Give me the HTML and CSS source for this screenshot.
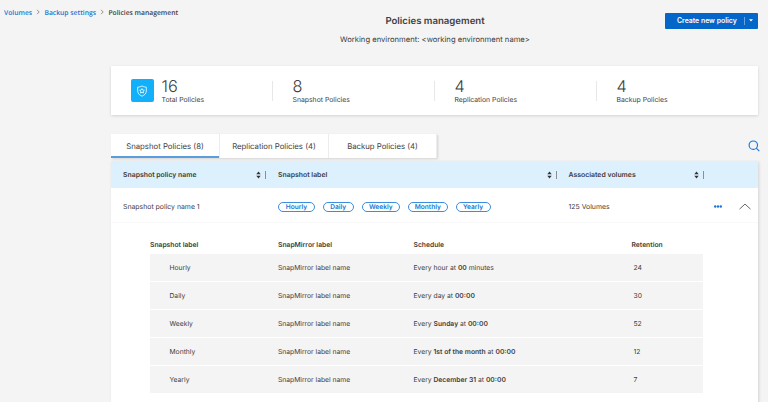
FILE: index.html
```html
<!DOCTYPE html>
<html lang="en">
<head>
<meta charset="utf-8">
<title>Policies management</title>
<link rel="stylesheet" href="styles.css">
</head>
<body>
<header class="top">
  <nav class="crumbs">
    <a>Volumes</a>
    <svg class="sep" viewBox="0 0 4 6"><path d="M1 .8 3.2 3 1 5.2"/></svg>
    <a>Backup settings</a>
    <svg class="sep" viewBox="0 0 4 6"><path d="M1 .8 3.2 3 1 5.2"/></svg>
    <span>Policies management</span>
  </nav>
  <div class="heading">
    <h1>Policies management</h1>
    <p>Working environment: &lt;working environment name&gt;</p>
  </div>
  <button class="create"><span>Create new policy</span><i class="split"></i><svg viewBox="0 0 4 3"><path d="M0 .3h4L2 2.5z"/></svg></button>
</header>
<main>
  <section class="stats">
    <div class="stat">
      <div class="shield"><svg viewBox="0 0 12 12"><path d="M6 .9C4.6 1.8 3.2 2.1 1.7 2.1V6c0 2.5 1.7 4.1 4.3 5.2C8.6 10.1 10.3 8.5 10.3 6V2.1C8.8 2.1 7.4 1.8 6 .9z"/><path d="m6 3.6.75 1.450 1.6.25L7.2 6.450l.25 1.6L6 7.3l-1.450.75.25-1.6L3.650 5.3l1.6-.25z"/></svg></div>
      <div><b>16</b><span>Total Policies</span></div>
    </div>
    <div class="stat"><div><b>8</b><span>Snapshot Policies</span></div></div>
    <div class="stat"><div><b>4</b><span>Replication Policies</span></div></div>
    <div class="stat"><div><b>4</b><span>Backup Policies</span></div></div>
  </section>
  <div class="toolbar">
    <div class="tabs">
      <div class="tab active">Snapshot Policies (8)</div>
      <div class="tab">Replication Policies (4)</div>
      <div class="tab">Backup Policies (4)</div>
    </div>
    <svg class="search" viewBox="0 0 12 12"><circle cx="5.300" cy="5.200" r="4.200"/><path d="m8.300 8.200 3 3"/></svg>
  </div>
  <section class="table">
    <div class="row head">
      <div class="cell">Snapshot policy name<svg class="sort" viewBox="0 0 11 8"><path d="M.3 3.300 2.500.600l2.200 2.700zM.3 4.700h4.400L2.500 7.400z"/><path class="bar" d="M9.500 0v8"/></svg></div>
      <div class="cell">Snapshot label<svg class="sort" viewBox="0 0 11 8"><path d="M.3 3.300 2.500.600l2.200 2.700zM.3 4.700h4.400L2.500 7.400z"/><path class="bar" d="M9.500 0v8"/></svg></div>
      <div class="cell">Associated volumes<svg class="sort" viewBox="0 0 11 8"><path d="M.3 3.300 2.500.600l2.200 2.700zM.3 4.700h4.400L2.500 7.400z"/><path class="bar" d="M9.500 0v8"/></svg></div>
      <div class="cell"></div>
    </div>
    <div class="row data">
      <div class="cell">Snapshot policy name 1</div>
      <div class="cell pills"><span class="pill hourly">Hourly</span><span class="pill daily">Daily</span><span class="pill weekly">Weekly</span><span class="pill monthly">Monthly</span><span class="pill yearly">Yearly</span></div>
      <div class="cell">125 Volumes</div>
      <div class="cell actions">
        <svg class="dots" viewBox="0 0 8 3"><circle cx="1.200" cy="1.500" r="1.200"/><circle cx="4" cy="1.500" r="1.200"/><circle cx="6.800" cy="1.500" r="1.200"/></svg>
        <svg class="chev" viewBox="0 0 12 7"><path d="M.5 6.100 6 1.100l5.500 5"/></svg>
      </div>
    </div>
    <div class="details">
      <div class="line titles"><span>Snapshot label</span><span>SnapMirror label</span><span>Schedule</span><span>Retention</span></div>
      <div class="line"><span>Hourly</span><span>SnapMirror label name</span><span>Every hour at <b>00</b> minutes</span><span>24</span></div>
      <div class="line"><span>Daily</span><span>SnapMirror label name</span><span>Every day at <b>00:00</b></span><span>30</span></div>
      <div class="line"><span>Weekly</span><span>SnapMirror label name</span><span>Every <b>Sunday</b> at <b>00:00</b></span><span>52</span></div>
      <div class="line"><span>Monthly</span><span>SnapMirror label name</span><span>Every <b>1st of the month</b> at <b>00:00</b></span><span>12</span></div>
      <div class="line"><span>Yearly</span><span>SnapMirror label name</span><span>Every <b>December 31</b> at <b>00:00</b></span><span>7</span></div>
    </div>
  </section>
</main>
</body>
</html>
```
FILE: styles.css
```css
* { box-sizing: border-box; }
body { margin: 0; height: 402px; overflow: hidden; background: #f4f4f4; color: #404040; font-family: Inter, sans-serif; font-size: 6.900px; line-height: 10px; text-rendering: geometricPrecision; }
svg { display: block; fill: none; flex: none; }
.top { display: grid; grid-template-columns: 330px 210px 1fr; height: 66px; }
.crumbs { display: flex; align-items: center; height: 10px; margin: 7px 0 0 4px; font: 600 6.750px/10px "Open Sans", sans-serif; white-space: nowrap; }
.crumbs a { color: #1976d2; }
.crumbs a, .crumbs span { padding-top: 1px; }
.sep { width: 4px; height: 6px; margin: 0 4.200px; stroke: #777; stroke-width: .8; }
.heading { text-align: center; }
h1 { margin: 16px 0 0; font-size: 9.600px; line-height: 12px; font-weight: 600; }
.heading p { margin: 6px 0 0; font-size: 7.650px; line-height: 12px; white-space: nowrap; }
.create { display: flex; align-items: center; justify-self: end; width: 93px; height: 16px; margin: 12.500px 10px 0 0; padding: 0 0 0 12px; border: 0; border-radius: 1px; background: #0566ca; color: #fff; font: 600 6.900px/10px Inter, sans-serif; white-space: nowrap; }
.create span { width: 67px; text-align: left; }
.split { width: 1px; height: 8px; background: #69a3df; }
.create svg { width: 4px; height: 3px; margin-left: 4px; fill: #fff; }
main { width: 647px; margin-left: 111px; }
.stats { display: grid; grid-template-columns: repeat(4, 162px); width: 647px; height: 49px; background: #fff; box-shadow: 0 1px 3px #0002; align-items: center; }
.stat { display: flex; align-items: center; height: 20px; padding-left: 19.500px; border-right: 1px solid #e7e7e7; }
.stat:last-child { border-right: 0; }
.shield { display: grid; place-items: center; width: 23px; height: 23px; margin-right: 8px; border-radius: 2px; background: #12affa; }
.shield svg { width: 12px; height: 12px; stroke: #fff; stroke-width: .8; }
.stat b { display: block; font-size: 16.300px; line-height: 18px; font-weight: 300; }
.stat span { display: block; font-size: 6.850px; line-height: 9px; white-space: nowrap; }
.toolbar { display: flex; justify-content: space-between; height: 46px; padding-top: 19px; }
.tabs { display: grid; grid-template-columns: 109px 109px 108px; height: 23.500px; background: #fff; box-shadow: 1px 1px 2px #0002; font-size: 7.750px; }
.tab { display: flex; align-items: center; justify-content: center; border-right: 1px solid #ececec; white-space: nowrap; }
.tab.active { box-shadow: inset 0 -2px #599ddd; }
.search { width: 12px; height: 12px; margin: 6px -2px 0 0; stroke: #1976d2; stroke-width: 1.150; }
.table { height: 260px; background: #fff; box-shadow: 1px 1px 3px #0002; }
.row { display: grid; grid-template-columns: 155px 290.500px 147.500px 1fr; }
.cell { display: flex; align-items: center; padding-left: 12px; white-space: nowrap; }
.head { height: 27px; background: #dcf0fe; font-weight: 600; }
.head .cell { justify-content: space-between; }
.sort { width: 11px; height: 8px; margin-right: -1px; fill: #333; }
.bar { stroke: #777; stroke-width: .8; }
.data { height: 35px; padding-top: 3px; border-bottom: 1px solid #f9f9f9; }
.pill { display: flex; align-items: center; justify-content: center; height: 10px; border: .8px solid #3c8ddd; border-radius: 5px; color: #1976d2; font-weight: 600; font-size: 6.600px; margin-right: 7.500px; }
.hourly { width: 37px; }
.daily { width: 31.500px; }
.weekly { width: 38.500px; }
.monthly { width: 40.500px; }
.yearly { width: 35px; }
.actions { padding-left: 10px; }
.dots { width: 8px; height: 3px; fill: #1976d2; }
.chev { width: 12px; height: 7px; margin-left: 17px; stroke: #666; stroke-width: 1; }
.details { width: 553px; margin: 14px 0 0 39px; }
.line { display: grid; grid-template-columns: 128px 135.500px 218px 1fr; align-items: center; height: 27px; margin-bottom: 1px; background: #f4f4f4; font-size: 6.750px; white-space: nowrap; }
.line b { font-weight: 600; }
.line span:first-child { padding-left: 19.500px; }
.line span:last-child { padding-left: 2px; }
.line.titles { height: 16px; background: none; font-weight: 600; }
.line.titles span { padding-left: 0; }
```
